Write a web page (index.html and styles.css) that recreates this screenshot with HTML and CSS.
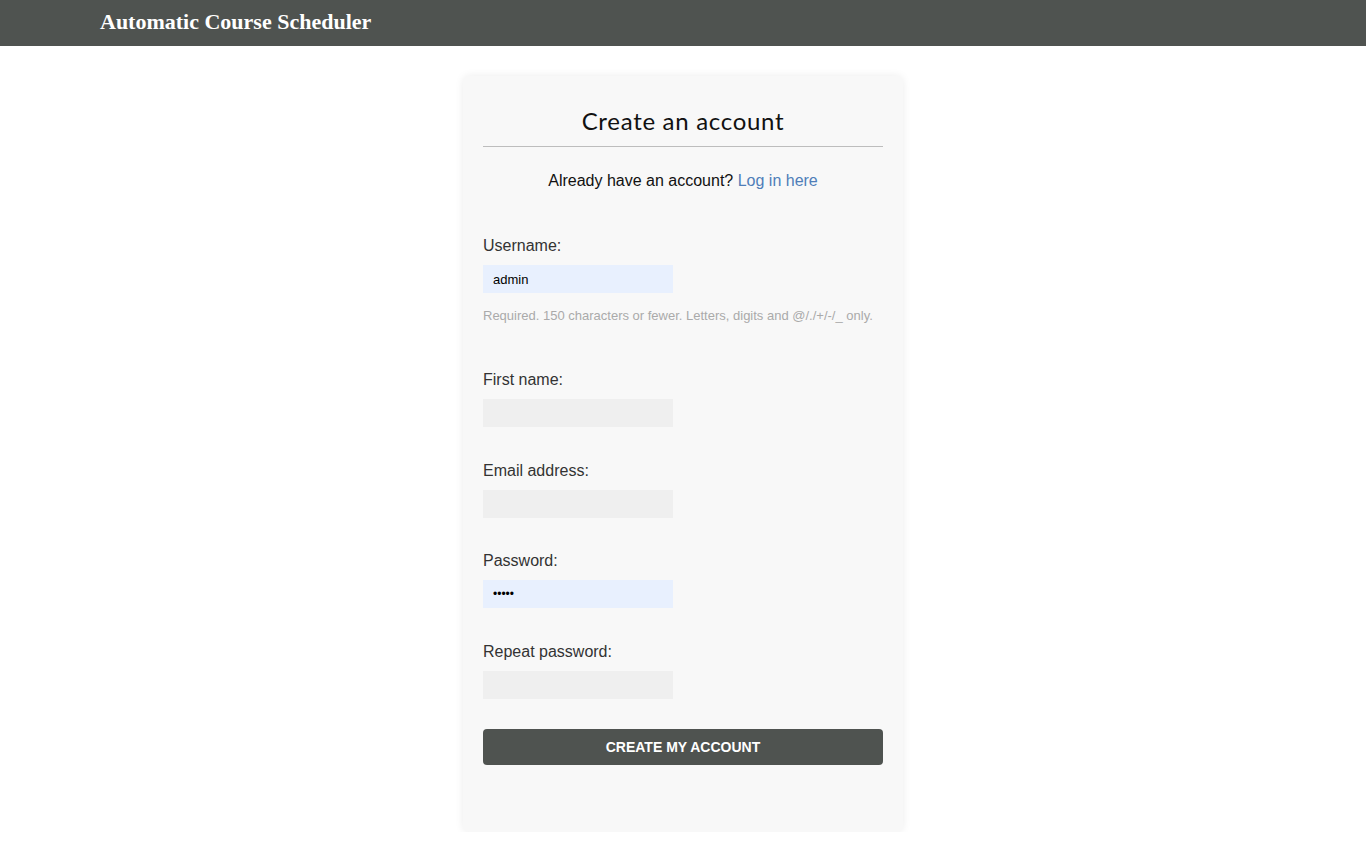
FILE: index.html
```html
<!DOCTYPE html>
<html>
<head>
<meta charset="utf-8">
<title>Automatic Course Scheduler</title>
<link rel="stylesheet" href="styles.css">
</head>
<body>
<header class="topbar">
  <div class="brand">Automatic Course Scheduler</div>
</header>
<main class="page">
  <div class="card">
    <h2 class="card-title">Create an account</h2>
    <hr class="divider">
    <p class="login-line">Already have an account? <a href="#" class="link">Log in here</a></p>
    <form class="form">
      <div class="field field-first">
        <label class="label">Username:</label>
        <input class="input autofill" type="text" value="admin">
        <div class="help">Required. 150 characters or fewer. Letters, digits and @/./+/-/_ only.</div>
      </div>
      <div class="field field-after-help">
        <label class="label">First name:</label>
        <input class="input" type="text">
      </div>
      <div class="field">
        <label class="label">Email address:</label>
        <input class="input" type="text">
      </div>
      <div class="field field-tight">
        <label class="label">Password:</label>
        <input class="input autofill pw" type="password" value="admin">
      </div>
      <div class="field">
        <label class="label">Repeat password:</label>
        <input class="input" type="password">
      </div>
      <button type="button" class="submit">CREATE MY ACCOUNT</button>
    </form>
  </div>
</main>
</body>
</html>
```
FILE: styles.css
```css
* { box-sizing: border-box; }
html, body { margin: 0; padding: 0; background: #ffffff; }
body { font-family: "Liberation Sans", Arial, sans-serif; color: #333; }

.topbar {
  height: 46px;
  background: #4f5350;
  display: flex;
  align-items: center;
  padding-left: 100px;
}
.brand {
  font-family: "Liberation Serif", "Times New Roman", serif;
  font-weight: bold;
  font-size: 22px;
  color: #ffffff;
  line-height: 1;
  margin-top: -2px;
}

.page {
  display: flex;
  justify-content: center;
  padding-top: 30px;
}
.card {
  width: 440px;
  background: #f8f8f8;
  border-radius: 6px;
  box-shadow: 0 0 8px rgba(0,0,0,0.08);
  padding: 20px 20px 67px;
}
.card-title {
  margin: 11px 0 0;
  font-family: "Lato", "Open Sans", sans-serif;
  font-weight: 400;
  font-size: 24px;
  line-height: 28px;
  text-align: center;
  color: #111;
  letter-spacing: 0.7px;
}
.divider {
  margin: 11px 0 0;
  border: 0;
  height: 1px;
  background: #bdbdbd;
}
.login-line {
  margin: 25px 0 0;
  text-align: center;
  font-size: 16px;
  line-height: 18px;
  color: #111;
}
.link { color: #4f7eb8; text-decoration: none; }

.form { display: flex; flex-direction: column; }
.field { display: flex; flex-direction: column; align-items: flex-start; margin-top: 34px; }
.field-first { margin-top: 46px; }
.field-after-help { margin-top: 47px; }
.field-tight { margin-top: 33px; }
.label {
  font-size: 16px;
  line-height: 18px;
  color: #333;
  padding-top: 1px;
  margin-bottom: 10px;
}
.input {
  width: 190px;
  height: 28px;
  border: 0;
  background: #efefef;
  padding: 0 10px;
  font-family: "Liberation Sans", Arial, sans-serif;
  font-size: 13px;
  color: #000;
  outline: none;
}
.input.autofill { background: #e8f0fe; }
.input.pw { font-size: 12px; letter-spacing: 0; }
.help {
  margin-top: 15px;
  font-size: 13px;
  line-height: 15px;
  color: #aaaaaa;
}
.submit {
  margin-top: 30px;
  height: 36px;
  width: 100%;
  border: 0;
  border-radius: 4px;
  background: #4f5350;
  color: #fff;
  font-family: "Liberation Sans", Arial, sans-serif;
  font-weight: bold;
  font-size: 14px;
  cursor: pointer;
}
```
